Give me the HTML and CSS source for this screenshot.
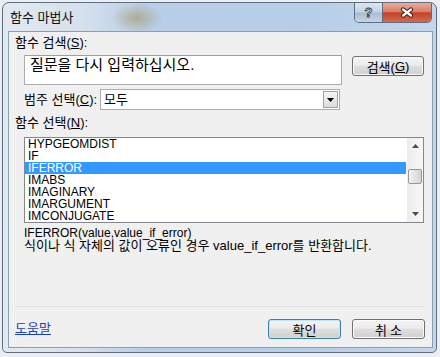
FILE: index.html
```html
<!DOCTYPE html>
<html lang="ko">
<head>
    <meta charset="UTF-8">
    <title>함수 마법사</title>
    <link rel="stylesheet" href="styles.css">
</head>
<body>
    <div class="window">
        <div class="titlebar">
            <span class="title">함수 마법사</span>
            <div class="caption-buttons">
                <span class="cap-help">?</span>
                <span class="cap-close">
                    <svg width="14" height="11" viewBox="0 0 14 11">
                        <path d="M3 2.5 L11 8.5 M11 2.5 L3 8.5" stroke="#4a1a12" stroke-width="4.2" stroke-linecap="round"/>
                        <path d="M3 2.5 L11 8.5 M11 2.5 L3 8.5" stroke="#ffffff" stroke-width="2.2" stroke-linecap="round"/>
                    </svg>
                </span>
            </div>
        </div>

        <div class="panel">
            <div class="label">함수 검색(<u>S</u>):</div>
            <div class="search-row">
                <div class="textbox">질문을 다시 입력하십시오.</div>
                <button class="button search-btn">검색(<u>G</u>)</button>
            </div>

            <div class="category-row">
                <span class="category-label">범주 선택(<u>C</u>):</span>
                <div class="combo">
                    <span class="combo-value">모두</span>
                    <span class="combo-arrow">
                        <svg width="7" height="4" viewBox="0 0 7 4"><path d="M0 0 H7 L3.5 4 Z" fill="#000"/></svg>
                    </span>
                </div>
            </div>

            <div class="label label-list">함수 선택(<u>N</u>):</div>
            <div class="listbox">
                <ul class="items">
                    <li>HYPGEOMDIST</li>
                    <li>IF</li>
                    <li class="selected">IFERROR</li>
                    <li>IMABS</li>
                    <li>IMAGINARY</li>
                    <li>IMARGUMENT</li>
                    <li>IMCONJUGATE</li>
                </ul>
                <div class="scrollbar">
                    <span class="scroll-arrow">
                        <svg width="7" height="4" viewBox="0 0 7 4"><path d="M0 4 H7 L3.5 0 Z" fill="#4d4d4d"/></svg>
                    </span>
                    <span class="scroll-thumb"></span>
                    <span class="scroll-arrow scroll-down">
                        <svg width="7" height="4" viewBox="0 0 7 4"><path d="M0 0 H7 L3.5 4 Z" fill="#4d4d4d"/></svg>
                    </span>
                </div>
            </div>

            <div class="signature">IFERROR(value,value_if_error)</div>
            <div class="description">식이나 식 자체의 값이 오류인 경우 value_if_error를 반환합니다.</div>

            <div class="separator"></div>

            <div class="footer">
                <a class="help-link" href="#">도움말</a>
                <button class="button ok">확인</button>
                <button class="button cancel">취소</button>
            </div>
        </div>
    </div>
</body>
</html>
```

FILE: styles.css
```css
body {
    margin: 0;
    background: #eceef1;
    font-family: "Liberation Sans", "Noto Sans CJK KR", sans-serif;
    font-size: 13px;
    color: #000;
}
.window {
    margin: 2px 0 0 2px;
    width: 435px;
    height: 351px;
    box-sizing: border-box;
    padding: 0 3px 4px 5px;
    border: 1px solid #5f6f82;
    border-radius: 7px 7px 5px 5px;
    background:
        radial-gradient(ellipse 26px 15px at 134px 15px, rgba(168, 166, 128, 0.8), rgba(168, 166, 128, 0)),
        linear-gradient(90deg, #e2e9f1 0%, #d6e1ed 18%, #b9cfe8 32%, #b7cee8 70%, #c3d6ec 100%);
}
.titlebar {
    display: flex;
    align-items: flex-start;
    height: 28px;
}
.title {
    padding: 7px 0 0 2px;
    line-height: 16px;
    color: #111;
}
.caption-buttons {
    display: flex;
    margin-left: auto;
    margin-right: 1px;
    height: 19px;
    border: 1px solid #5d6c7e;
    border-top: none;
    border-radius: 0 0 5px 5px;
    overflow: hidden;
}
.cap-help {
    width: 27px;
    display: flex;
    align-items: center;
    justify-content: center;
    border-right: 1px solid #5d6c7e;
    background: linear-gradient(#dce6f0, #c3d2e2 48%, #a9bbcf 52%, #c4d5e6);
    color: #eef3f8;
    font-weight: bold;
    -webkit-text-stroke: 0.8px #2a3848;
}
.cap-close {
    width: 48px;
    display: flex;
    align-items: center;
    justify-content: center;
    background: linear-gradient(#e9ab9a, #d98068 45%, #c5412a 52%, #d5694f);
}
.panel {
    width: 425px;
    height: 317px;
    box-sizing: border-box;
    border: 1px solid #8b9db2;
    background: #f0f0f0;
}
.label {
    margin: 4px 0 0 6px;
    line-height: 14px;
}
.search-row {
    display: flex;
    margin: 5px 0 0 15px;
}
.textbox {
    width: 318px;
    height: 30px;
    box-sizing: border-box;
    padding: 1px 5px;
    line-height: 16px;
    font-size: 15px;
    border: 1px solid #abadb3;
    border-top-color: #9a9ea6;
    background: #fff;
}
.button {
    box-sizing: border-box;
    height: 20px;
    padding: 0;
    display: flex;
    align-items: center;
    justify-content: center;
    border: 1px solid #707070;
    border-radius: 3px;
    background: linear-gradient(#f4f4f4 0%, #ececec 45%, #dedede 52%, #d0d0d0 100%);
    box-shadow: inset 0 0 0 1px #fbfbfb;
    font: inherit;
    color: #000;
}
.search-btn {
    width: 72px;
    margin: 1px 0 0 10px;
}
.category-row {
    display: flex;
    align-items: center;
    margin: 4px 0 0 15px;
}
.category-label {
    width: 76px;
    line-height: 14px;
}
.combo {
    display: flex;
    align-items: center;
    width: 240px;
    height: 21px;
    box-sizing: border-box;
    border: 1px solid #abadb3;
    background: #fff;
}
.combo-value {
    flex: 1;
    padding-left: 3px;
    line-height: 14px;
}
.combo-arrow {
    width: 15px;
    height: 17px;
    margin-right: 1px;
    box-sizing: border-box;
    display: flex;
    align-items: center;
    justify-content: center;
    border: 1px solid #a3a3a3;
    background: linear-gradient(#f5f5f5, #dcdcdc);
}
.label-list {
    margin-top: 6px;
}
.listbox {
    display: flex;
    width: 400px;
    height: 86px;
    box-sizing: border-box;
    margin: 7px 0 0 15px;
    border: 1px solid #828790;
    background: #fff;
}
.items {
    flex: 1;
    list-style: none;
    margin: 0;
    padding: 0;
    font-size: 12px;
}
.items li {
    line-height: 12px;
    padding-left: 3px;
    margin-right: 1px;
}
.items li.selected {
    background: #3399ff;
    color: #fff;
}
.scrollbar {
    width: 16px;
    display: flex;
    flex-direction: column;
    background: linear-gradient(90deg, #ececec, #f8f8f8);
}
.scroll-arrow {
    height: 16px;
    display: flex;
    align-items: center;
    justify-content: center;
}
.scroll-thumb {
    height: 15px;
    margin: 15px 1px 0 1px;
    box-sizing: border-box;
    border: 1px solid #979797;
    border-radius: 2px;
    background: linear-gradient(90deg, #f3f3f3, #e2e2e2 50%, #d4d4d4);
}
.scroll-down {
    margin-top: auto;
}
.signature {
    margin: 4px 0 0 15px;
    line-height: 12px;
    font-size: 12px;
}
.description {
    margin-left: 15px;
    line-height: 13px;
}
.separator {
    width: 410px;
    height: 1px;
    margin: 54px 0 0 6px;
    background: #dde1e6;
}
.footer {
    display: flex;
    align-items: center;
    margin: 12px 0 0 6px;
}
.help-link {
    margin-right: auto;
    color: #1a3fc4;
    text-decoration: underline;
    line-height: 14px;
}
.ok {
    width: 73px;
    margin-right: 11px;
    border-color: #3c7fb1;
    box-shadow: inset 0 0 0 1px #bfe6f9;
}
.cancel {
    width: 73px;
    margin-right: 7px;
    letter-spacing: 3px;
    text-indent: 3px;
}
```
